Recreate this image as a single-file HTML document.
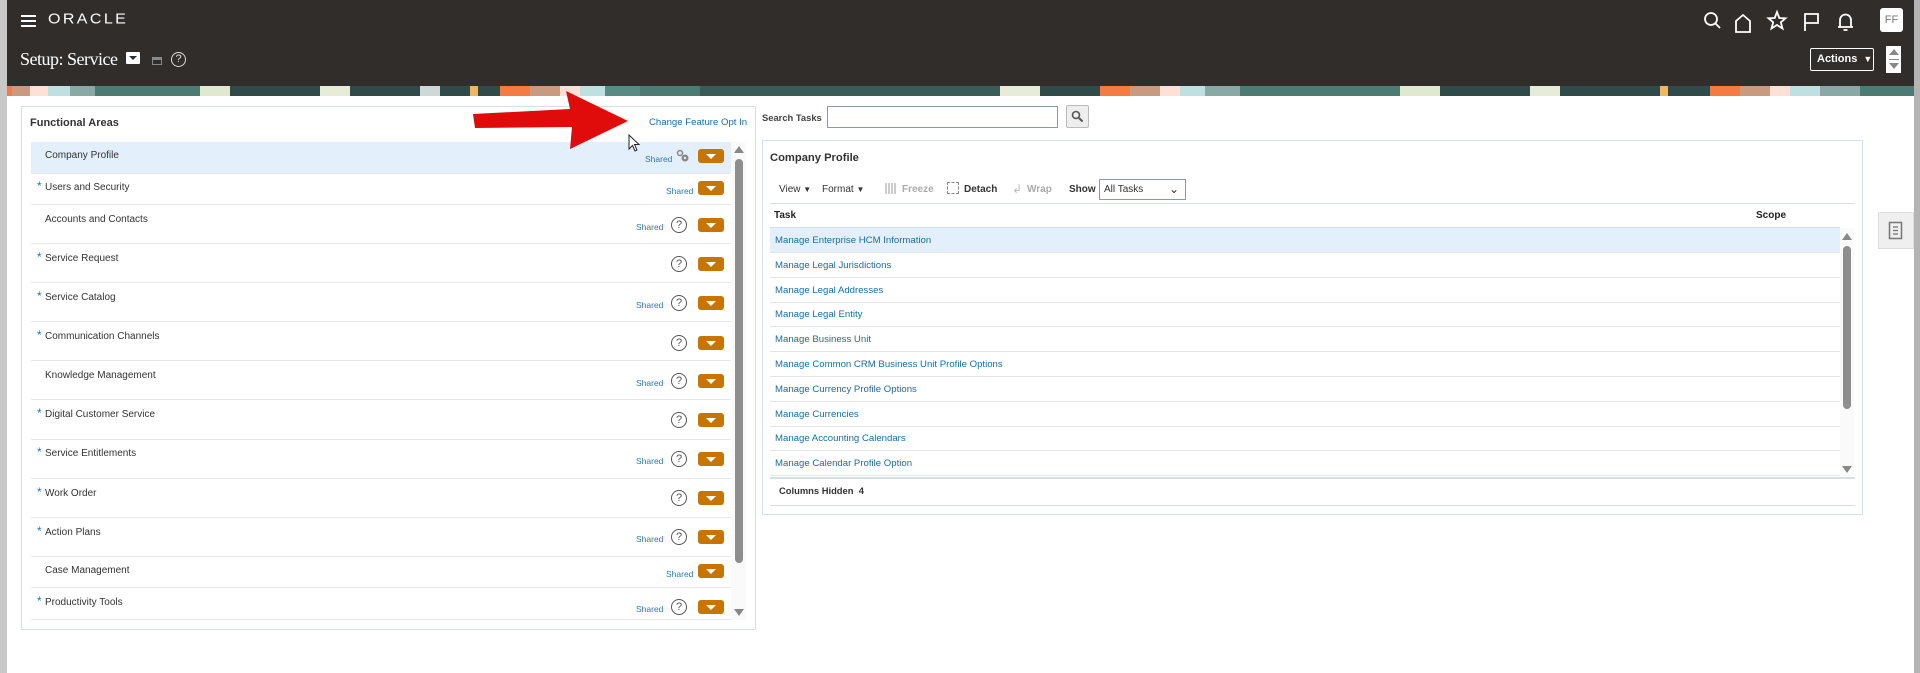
<!DOCTYPE html>
<html><head><meta charset="utf-8">
<style>
*{margin:0;padding:0;box-sizing:border-box}
body{width:1920px;height:673px;overflow:hidden;background:#fff;font-family:"Liberation Sans",Arial,sans-serif;position:relative;color:#333}
.a{position:absolute}
.hdr{left:0;top:0;width:1920px;height:86px;background:#312d2a}
.banner{left:0;top:86px;width:1920px;height:10px;background:
linear-gradient(90deg,#f47b42 0 12px,#c89a80 12px 30px,#fde0d6 30px 48px,#bfe0e0 48px 70px,#8aa9a6 70px 95px,#4e7a74 95px 200px,#e0e8d0 200px 230px,#2f4a48 230px 320px,#e6ecd8 320px 350px,#2f4a48 350px 420px,#cfd8d8 420px 440px,#2f4a48 440px 470px,#f0b660 470px 478px,#2f4a48 478px 500px,#f47b42 500px 530px,#c89a80 530px 560px,#fde0d6 560px 580px,#bfe0e0 580px 605px,#5a8a84 605px 640px,#4e7a74 640px 700px,#3a5c58 700px 1000px,#e6ecd8 1000px 1040px,#2f4a48 1040px 1100px,#f47b42 1100px 1130px,#c89a80 1130px 1160px,#fde0d6 1160px 1180px,#bfe0e0 1180px 1205px,#8aa9a6 1205px 1240px,#4e7a74 1240px 1400px,#e0e8d0 1400px 1440px,#2f4a48 1440px 1530px,#e6ecd8 1530px 1560px,#2f4a48 1560px 1660px,#f0b660 1660px 1668px,#2f4a48 1668px 1710px,#f47b42 1710px 1740px,#c89a80 1740px 1770px,#fde0d6 1770px 1790px,#bfe0e0 1790px 1820px,#8aa9a6 1820px 1860px,#4e7a74 1860px 1920px)}
.gl{left:0;top:0;width:7px;height:673px;background:#c8c8c8}
.gr{left:1914px;top:0;width:6px;height:673px;background:#b4b4b4}
.box{border:1px solid #d6dfe6;background:#fff}
.row{left:31px;width:700px;border-bottom:1px solid #e8e8e8}
.lt{font-size:10px;color:#333;left:45px}
.ast{color:#1e7ab8;font-size:12px;left:37px}
.sh{font-size:8.5px;color:#2a7bab}
.ob{width:26px;height:14px;background:#c77400;border-radius:3px}
.ob:after{content:"";position:absolute;left:8px;top:5px;border-left:5px solid transparent;border-right:5px solid transparent;border-top:5px solid #fff}
.hq{width:16px;height:16px;border:1.3px solid #555;border-radius:50%;font-size:11px;color:#555;text-align:center;line-height:14px}
.tl{font-size:9.6px;color:#1a6c9e;left:775px}
.tr{left:770px;width:1070px;height:25px;border-bottom:1px solid #e6e6e6}
</style></head><body>
<div class="a hdr"></div>
<div class="a banner"></div>
<div class="a gl"></div>
<div class="a gr"></div>
<div class="a" style="left:21px;top:15px;width:15px;height:2px;background:#fff"></div>
<div class="a" style="left:21px;top:20px;width:15px;height:2px;background:#fff"></div>
<div class="a" style="left:21px;top:25px;width:15px;height:2px;background:#fff"></div>
<div class="a" style="left:48px;top:11px;color:#fff;font-size:16px;letter-spacing:2.4px;transform:scaleY(0.9)">ORACLE</div>
<div class="a" style="left:20px;top:49px;color:#fff;font-family:'Liberation Serif',serif;font-size:18px;letter-spacing:-0.5px">Setup: Service</div>
<div class="a" style="left:126px;top:52px;width:14px;height:12px;background:#fff;border-radius:1px"></div>
<div class="a" style="left:129px;top:56px;border-left:4px solid transparent;border-right:4px solid transparent;border-top:4px solid #312d2a"></div>
<div class="a" style="left:152px;top:57px;width:10px;height:8px;border:1.5px solid #888;border-top-width:3px"></div>
<div class="a" style="left:171px;top:52px;width:15px;height:15px;border:1.3px solid #ddd;border-radius:50%;color:#ddd;font-size:11px;text-align:center;line-height:13px">?</div>
<svg class="a" style="left:1696px;top:7px" width="220" height="30" viewBox="0 0 220 30" fill="none" stroke="#fff" stroke-width="1.8">
<circle cx="15" cy="12" r="6"/><line x1="19.5" y1="16.5" x2="24" y2="21"/>
<path d="M40 25V14L47 8L54 14V25Z"/>
<path d="M81 5L83.3 11L89.5 11.3L84.8 15.3L86.5 21.5L81 18L75.5 21.5L77.2 15.3L72.5 11.3L78.7 11Z"/>
<path d="M109 24V7H122V16H109"/>
<path d="M144 20V13a5.5 5.5 0 0 1 11 0V20H142H157M147.5 23h4"/>
</svg>
<div class="a" style="left:1880px;top:8px;width:23px;height:24px;background:#fff;border-radius:3px;color:#777;font-size:11px;text-align:center;line-height:24px">FF</div>
<div class="a" style="left:1810px;top:48px;width:64px;height:23px;border:1px solid #fff;border-radius:2px;color:#fff;font-size:11px;font-weight:bold;line-height:21px;padding-left:6px">Actions <span style="font-size:9px;margin-left:3px">▼</span></div>
<div class="a" style="left:1886px;top:46px;width:15px;height:27px;background:#fff"></div>
<div class="a" style="left:1889px;top:49px;border-left:5px solid transparent;border-right:5px solid transparent;border-bottom:6px solid #888"></div>
<div class="a" style="left:1889px;top:59px;width:10px;height:1px;background:#888"></div>
<div class="a" style="left:1889px;top:63px;border-left:5px solid transparent;border-right:5px solid transparent;border-top:6px solid #888"></div>

<div class="a box" style="left:21px;top:106px;width:735px;height:524px"></div>
<div class="a" style="left:30px;top:117px;font-size:11px;font-weight:bold;color:#333">Functional Areas</div>
<div class="a" style="left:649px;top:117px;font-size:9.6px;color:#1a6c9e">Change Feature Opt In</div>
<div class="a" style="left:31px;top:142px;width:700px;height:31px;background:#e3effb"></div>
<div class="a row" style="top:142px;height:32px"></div>
<div class="a row" style="top:174px;height:31px"></div>
<div class="a row" style="top:205px;height:39px"></div>
<div class="a row" style="top:244px;height:39px"></div>
<div class="a row" style="top:283px;height:39px"></div>
<div class="a row" style="top:322px;height:39px"></div>
<div class="a row" style="top:361px;height:39px"></div>
<div class="a row" style="top:400px;height:40px"></div>
<div class="a row" style="top:440px;height:39px"></div>
<div class="a row" style="top:479px;height:39px"></div>
<div class="a row" style="top:518px;height:39px"></div>
<div class="a row" style="top:557px;height:31px"></div>
<div class="a row" style="top:588px;height:32px"></div>
<div class="a" style="left:731px;top:142px;width:15px;height:478px;background:#fafafa"></div>
<div class="a" style="left:734px;top:146px;border-left:5px solid transparent;border-right:5px solid transparent;border-bottom:7px solid #888"></div>
<div class="a" style="left:735px;top:159px;width:8px;height:404px;background:#8e8e8e;border-radius:4px"></div>
<div class="a" style="left:734px;top:609px;border-left:5px solid transparent;border-right:5px solid transparent;border-top:7px solid #888"></div>

<div class="a lt" style="top:150px">Company Profile</div>
<div class="a sh" style="left:645px;top:154px">Shared</div>
<svg class="a" style="left:676px;top:149px" width="14" height="14"><circle cx="4" cy="4" r="2.5" fill="none" stroke="#888" stroke-width="1.5"/><circle cx="9" cy="9" r="3.5" fill="#888"/><circle cx="9" cy="9" r="1.2" fill="#e3effb"/></svg>
<div class="a ob" style="left:698px;top:149px"></div>

<div class="a ast" style="top:179px">*</div><div class="a lt" style="top:182px">Users and Security</div>
<div class="a sh" style="left:666px;top:186px">Shared</div><div class="a ob" style="left:698px;top:181px"></div>

<div class="a lt" style="top:214px">Accounts and Contacts</div>
<div class="a sh" style="left:636px;top:222px">Shared</div><div class="a hq" style="left:671px;top:217px">?</div><div class="a ob" style="left:698px;top:218px"></div>

<div class="a ast" style="top:250px">*</div><div class="a lt" style="top:253px">Service Request</div>
<div class="a hq" style="left:671px;top:256px">?</div><div class="a ob" style="left:698px;top:257px"></div>

<div class="a ast" style="top:289px">*</div><div class="a lt" style="top:292px">Service Catalog</div>
<div class="a sh" style="left:636px;top:300px">Shared</div><div class="a hq" style="left:671px;top:295px">?</div><div class="a ob" style="left:698px;top:296px"></div>

<div class="a ast" style="top:328px">*</div><div class="a lt" style="top:331px">Communication Channels</div>
<div class="a hq" style="left:671px;top:335px">?</div><div class="a ob" style="left:698px;top:336px"></div>

<div class="a lt" style="top:370px">Knowledge Management</div>
<div class="a sh" style="left:636px;top:378px">Shared</div><div class="a hq" style="left:671px;top:373px">?</div><div class="a ob" style="left:698px;top:374px"></div>

<div class="a ast" style="top:406px">*</div><div class="a lt" style="top:409px">Digital Customer Service</div>
<div class="a hq" style="left:671px;top:412px">?</div><div class="a ob" style="left:698px;top:413px"></div>

<div class="a ast" style="top:445px">*</div><div class="a lt" style="top:448px">Service Entitlements</div>
<div class="a sh" style="left:636px;top:456px">Shared</div><div class="a hq" style="left:671px;top:451px">?</div><div class="a ob" style="left:698px;top:452px"></div>

<div class="a ast" style="top:485px">*</div><div class="a lt" style="top:488px">Work Order</div>
<div class="a hq" style="left:671px;top:490px">?</div><div class="a ob" style="left:698px;top:491px"></div>

<div class="a ast" style="top:524px">*</div><div class="a lt" style="top:527px">Action Plans</div>
<div class="a sh" style="left:636px;top:534px">Shared</div><div class="a hq" style="left:671px;top:529px">?</div><div class="a ob" style="left:698px;top:530px"></div>

<div class="a lt" style="top:565px">Case Management</div>
<div class="a sh" style="left:666px;top:569px">Shared</div><div class="a ob" style="left:698px;top:564px"></div>

<div class="a ast" style="top:594px">*</div><div class="a lt" style="top:597px">Productivity Tools</div>
<div class="a sh" style="left:636px;top:604px">Shared</div><div class="a hq" style="left:671px;top:599px">?</div><div class="a ob" style="left:698px;top:600px"></div>

<svg class="a" style="left:460px;top:85px" width="180" height="75"><polygon points="13,29 110,24 106,6 168,36 110,64 112,42 15,43" fill="#e00b0b"/></svg>
<svg class="a" style="left:628px;top:134px" width="14" height="20"><path d="M1 1V15L4.5 11.5L7 17L9 16L6.5 10.5H11Z" fill="#fff" stroke="#222" stroke-width="1"/></svg>

<div class="a" style="left:762px;top:112px;font-size:9.4px;font-weight:bold;color:#444">Search Tasks</div>
<div class="a" style="left:827px;top:106px;width:231px;height:22px;border:1px solid #8a9aa8;background:#fff"></div>
<div class="a" style="left:1066px;top:105px;width:23px;height:23px;border:1px solid #bbb;background:#eee;border-radius:2px"></div>
<svg class="a" style="left:1071px;top:110px" width="13" height="13"><circle cx="5" cy="5" r="3.5" fill="none" stroke="#555" stroke-width="1.6"/><line x1="8" y1="8" x2="11.5" y2="11.5" stroke="#555" stroke-width="2"/></svg>

<div class="a box" style="left:762px;top:140px;width:1101px;height:375px"></div>
<div class="a" style="left:770px;top:152px;font-size:11.2px;font-weight:bold;color:#333">Company Profile</div>
<div class="a" style="left:779px;top:184px;font-size:10px;color:#333">View <span style="font-size:8px">▼</span></div>
<div class="a" style="left:822px;top:184px;font-size:10px;color:#333">Format <span style="font-size:8px">▼</span></div>
<div class="a" style="left:885px;top:183px;width:11px;height:11px;background:repeating-linear-gradient(90deg,#ccc 0 2px,#fff 2px 3px)"></div>
<div class="a" style="left:902px;top:184px;font-size:10px;color:#aaa;font-weight:bold">Freeze</div>
<div class="a" style="left:947px;top:182px;width:12px;height:12px;border:1px dashed #888"></div>
<div class="a" style="left:964px;top:184px;font-size:10px;color:#333;font-weight:bold">Detach</div>
<div class="a" style="left:1012px;top:182px;font-size:12px;color:#bbb">↲</div>
<div class="a" style="left:1027px;top:184px;font-size:10px;color:#aaa;font-weight:bold">Wrap</div>
<div class="a" style="left:1069px;top:184px;font-size:10px;color:#333;font-weight:bold">Show</div>
<div class="a" style="left:1099px;top:179px;width:87px;height:21px;border:1px solid #8a9aa8;font-size:10px;padding:4px 4px;color:#333">All Tasks<span style="position:absolute;right:6px;top:2px;font-size:12px">⌄</span></div>
<div class="a" style="left:770px;top:203px;width:1085px;height:1px;background:#d6dfe6"></div>
<div class="a" style="left:774px;top:210px;font-size:10px;font-weight:bold;color:#222">Task</div>
<div class="a" style="left:1756px;top:210px;font-size:10px;font-weight:bold;color:#222">Scope</div>
<div class="a" style="left:770px;top:227px;width:1070px;height:1px;background:#d6dfe6"></div>
<div class="a" style="left:770px;top:228px;width:1070px;height:25px;background:#e3effb"></div>
<div class="a tr" style="top:228px"></div>
<div class="a tr" style="top:253px"></div>
<div class="a tr" style="top:278px"></div>
<div class="a tr" style="top:302px"></div>
<div class="a tr" style="top:327px"></div>
<div class="a tr" style="top:352px"></div>
<div class="a tr" style="top:377px"></div>
<div class="a tr" style="top:402px"></div>
<div class="a tr" style="top:426px"></div>
<div class="a tr" style="top:451px"></div>
<div class="a tl" style="top:235px">Manage Enterprise HCM Information</div>
<div class="a tl" style="top:260px">Manage Legal Jurisdictions</div>
<div class="a tl" style="top:285px">Manage Legal Addresses</div>
<div class="a tl" style="top:309px">Manage Legal Entity</div>
<div class="a tl" style="top:334px">Manage Business Unit</div>
<div class="a tl" style="top:359px">Manage Common CRM Business Unit Profile Options</div>
<div class="a tl" style="top:384px">Manage Currency Profile Options</div>
<div class="a tl" style="top:409px">Manage Currencies</div>
<div class="a tl" style="top:433px">Manage Accounting Calendars</div>
<div class="a tl" style="top:458px">Manage Calendar Profile Option</div>
<div class="a" style="left:1840px;top:228px;width:14px;height:248px;background:#fafafa"></div>
<div class="a" style="left:1842px;top:233px;border-left:5px solid transparent;border-right:5px solid transparent;border-bottom:7px solid #888"></div>
<div class="a" style="left:1843px;top:246px;width:8px;height:163px;background:#8e8e8e;border-radius:4px"></div>
<div class="a" style="left:1842px;top:466px;border-left:5px solid transparent;border-right:5px solid transparent;border-top:7px solid #888"></div>
<div class="a" style="left:770px;top:477px;width:1085px;height:2px;background:#d6dfe6"></div>
<div class="a" style="left:779px;top:485px;font-size:9.4px;font-weight:bold;color:#333">Columns Hidden&nbsp; 4</div>
<div class="a" style="left:770px;top:505px;width:1085px;height:1px;background:#d6dfe6"></div>

<div class="a" style="left:1878px;top:212px;width:36px;height:37px;background:#efefef;border:1px solid #ddd"></div>
<svg class="a" style="left:1888px;top:221px" width="16" height="20"><rect x="1.5" y="1.5" width="12" height="16" fill="none" stroke="#777" stroke-width="1.5"/><line x1="5" y1="6" x2="10" y2="6" stroke="#777" stroke-width="1.3"/><line x1="5" y1="9.5" x2="10" y2="9.5" stroke="#777" stroke-width="1.3"/><line x1="5" y1="13" x2="10" y2="13" stroke="#777" stroke-width="1.3"/></svg>
</body></html>
